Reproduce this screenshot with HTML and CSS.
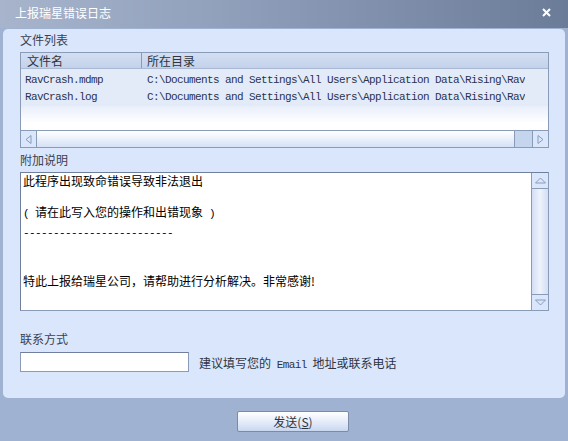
FILE: index.html
```html
<!DOCTYPE html>
<html lang="zh-CN">
<head>
  <meta charset="UTF-8" />
  <title>上报瑞星错误日志</title>
  <link rel="stylesheet" href="styles.css">
</head>
<body>

<div class="titlebar">
  <span class="title">上报瑞星错误日志</span>
  <svg class="close" width="9" height="9" viewBox="0 0 9 9">
    <path d="M1 1 L8 8 M8 1 L1 8" stroke="#fff" stroke-width="2" />
  </svg>
</div>

<div class="panel">
  <div class="label">文件列表</div>
  <div class="listbox">
    <div class="list-head">
      <div class="col-name">文件名</div>
      <div class="col-path">所在目录</div>
    </div>
    <div class="list-rows">
      <div class="list-row">
        <div class="col-name mono">RavCrash.mdmp</div>
        <div class="col-path mono">C:\Documents and Settings\All Users\Application Data\Rising\Rav</div>
      </div>
      <div class="list-row">
        <div class="col-name mono">RavCrash.log</div>
        <div class="col-path mono">C:\Documents and Settings\All Users\Application Data\Rising\Rav</div>
      </div>
    </div>
    <div class="list-empty"></div>
    <div class="hscroll">
      <div class="sbtn">
        <svg width="7" height="9" viewBox="0 0 7 9"><polygon points="6,0.5 6,8.5 1,4.5" fill="none" stroke="#8a9bb8" /></svg>
      </div>
      <div class="hthumb"></div>
      <div class="htrack"></div>
      <div class="sbtn">
        <svg width="7" height="9" viewBox="0 0 7 9"><polygon points="1,0.5 1,8.5 6,4.5" fill="none" stroke="#8a9bb8" /></svg>
      </div>
    </div>
  </div>

  <div class="label">附加说明</div>
  <div class="memo">
    <div class="memo-text">此程序出现致命错误导致非法退出<br><br><span class="mono">( </span>请在此写入您的操作和出错现象<span class="mono"> )</span><br><span class="mono">-------------------------</span><br><br><br>特此上报给瑞星公司，请帮助进行分析解决。非常感谢!</div>
    <div class="vscroll">
      <div class="vbtn">
        <svg width="11" height="7" viewBox="0 0 11 7"><polygon points="0.5,6 10.5,6 5.5,1" fill="none" stroke="#8a9bb8" /></svg>
      </div>
      <div class="vtrack"></div>
      <div class="vbtn">
        <svg width="11" height="7" viewBox="0 0 11 7"><polygon points="0.5,1 10.5,1 5.5,6" fill="none" stroke="#8a9bb8" /></svg>
      </div>
    </div>
  </div>

  <div class="label contact-label">联系方式</div>
  <div class="contact-row">
    <div class="contact-input"></div>
    <span class="hint">建议填写您的 <span class="mono">Email</span> 地址或联系电话</span>
  </div>
</div>

<div class="footer">
  <div class="send-btn">发送(<u>S</u>)</div>
</div>

</body>
</html>
```

FILE: styles.css
```css
* {
  margin: 0;
  padding: 0;
  box-sizing: border-box;
}

body {
  width: 568px;
  height: 441px;
  overflow: hidden;
  background-color: #9fb2d2;
  font-family: "Noto Sans CJK SC", "Liberation Sans", sans-serif;
  font-size: 12px;
  color: #2e3440;
}

.mono {
  font-family: "Liberation Mono", monospace;
  font-size: 11px;
  letter-spacing: -0.6px;
}

.titlebar {
  height: 28px;
  display: flex;
  align-items: center;
  justify-content: space-between;
  padding: 0 17px 0 15px;
  background: linear-gradient(90deg, #a7b4cc 0%, #8a9ab6 50%, #6b7c99 100%);
}

.title {
  color: #ffffff;
  font-size: 12px;
  margin-top: -3px;
}

.close {
  margin-top: -3px;
}

.panel {
  margin: 1px 3px 0;
  height: 369px;
  padding: 3px 16px 0 17px;
  background-color: #dae6fb;
  border-radius: 5px;
}

.label {
  height: 16px;
  line-height: 16px;
  color: #3a4150;
  margin-bottom: 4px;
}

.listbox {
  height: 96px;
  border: 1px solid #8a9bb8;
  display: flex;
  flex-direction: column;
  background: #ffffff;
  margin-bottom: 4px;
}

.list-head {
  height: 16px;
  display: flex;
  background: linear-gradient(180deg, #d3def2, #c3d2eb);
  border-bottom: 1px solid #a9b9d4;
  line-height: 15px;
  color: #2e3440;
}

.col-name {
  width: 121px;
  padding-left: 6px;
  white-space: nowrap;
}

.list-head .col-name {
  border-right: 1px solid #8a9bb8;
}

.col-path {
  padding-left: 5px;
  white-space: nowrap;
  overflow: hidden;
}

.list-rows {
  padding-top: 3px;
  background-color: #e3ebf9;
}

.list-row {
  height: 17px;
  display: flex;
  line-height: 17px;
  color: #2a3350;
}

.list-row .col-name {
  padding-left: 4px;
}

.list-row .col-path {
  padding-left: 5px;
}

.list-empty {
  flex: 1;
  background: linear-gradient(180deg, #e8eefa, #ffffff 70%);
}

.hscroll {
  height: 17px;
  display: flex;
  border-top: 1px solid #8a9bb8;
  background: #dae6fb;
}

.sbtn {
  width: 16px;
  display: flex;
  align-items: center;
  justify-content: center;
  border-right: 1px solid #8a9bb8;
  background: #dae6fb;
}

.sbtn:last-child {
  border-right: none;
  border-left: 1px solid #8a9bb8;
}

.hthumb {
  width: 478px;
  background: linear-gradient(180deg, #ffffff, #d5e1f6);
  border-right: 1px solid #8a9bb8;
}

.htrack {
  flex: 1;
  background: #c6d5ee;
}

.memo {
  height: 139px;
  display: flex;
  border: 1px solid #8a9bb8;
  border-top-color: #6f7f9c;
  border-left-color: #6f7f9c;
  background: #ffffff;
}

.memo-text {
  flex: 1;
  padding: 0 0 0 2px;
  line-height: 15.6px;
  color: #000000;
  white-space: nowrap;
}

.vscroll {
  width: 17px;
  display: flex;
  flex-direction: column;
  border-left: 1px solid #8a9bb8;
}

.vbtn {
  height: 16px;
  display: flex;
  align-items: center;
  justify-content: center;
  background: #dae6fb;
  border-bottom: 1px solid #8a9bb8;
}

.vbtn:last-child {
  border-bottom: none;
  border-top: 1px solid #8a9bb8;
}

.vtrack {
  flex: 1;
  background: linear-gradient(90deg, #d2def4, #eef3fc 50%, #d2def4);
}

.contact-label {
  margin-top: 20px;
  margin-bottom: 5px;
}

.contact-row {
  display: flex;
  align-items: center;
  gap: 10px;
}

.contact-input {
  width: 169px;
  height: 20px;
  background: #ffffff;
  border: 1px solid #8a9bb8;
  border-top-color: #6f7f9c;
}

.hint {
  color: #2e3440;
  white-space: nowrap;
}

.hint .mono {
  padding: 0 3px;
}

.footer {
  padding: 13px 0 0 237px;
}

.send-btn {
  width: 112px;
  height: 21px;
  line-height: 19px;
  text-align: center;
  border: 1px solid #7b8aa6;
  border-radius: 2px;
  background: linear-gradient(180deg, #ffffff, #e0e9f8 60%, #c8d6ee);
  color: #2e3440;
}
```
